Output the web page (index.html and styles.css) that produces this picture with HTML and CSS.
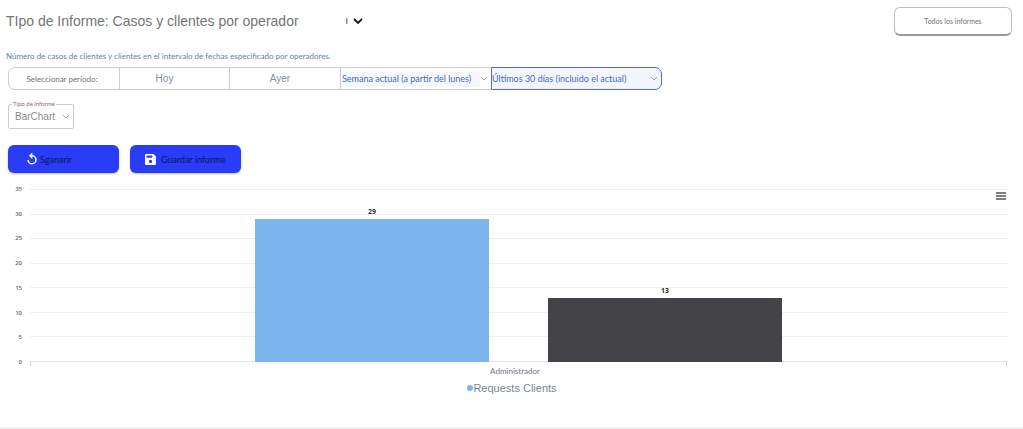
FILE: index.html
```html
<!DOCTYPE html>
<html lang="es">
<head>
<meta charset="utf-8">
<title>Informe de casos</title>
<link rel="stylesheet" href="styles.css">
</head>
<body>
<main class="page">
  <header class="header">
    <h1 class="title">TIpo de Informe: Casos y cllentes por operador</h1>
    <button class="switcher" type="button" aria-label="Cambiar informe"><span>I</span>
      <svg width="10" height="6" viewBox="0 0 10 6"><path d="M1 1l4 4 4-4" fill="none" stroke="#111" stroke-width="1.8"/></svg>
    </button>
    <button class="all-reports compact" type="button">Todos los informes</button>
  </header>
  <p class="description compact">Número de casos de clientes y clientes en el intervalo de fechas especificado por operadores.</p>

  <div class="periods">
    <span class="cell label compact">Seleccionar período:</span>
    <button class="cell today" type="button">Hoy</button>
    <button class="cell yesterday" type="button">Ayer</button>
    <div class="cell dropdown week">
      <select class="compact" aria-label="Semana"><option>Semana actual (a partir del lunes)</option></select>
      <svg class="chevron" width="8" height="5" viewBox="0 0 8 5"><path d="M1 1l3 3 3-3"/></svg>
    </div>
    <div class="cell dropdown days">
      <select class="compact" aria-label="Días"><option>Últimos 30 días (incluido el actual)</option></select>
      <svg class="chevron" width="8" height="5" viewBox="0 0 8 5"><path d="M1 1l3 3 3-3"/></svg>
    </div>
  </div>

  <div class="type-field">
    <label class="type-label compact" for="type">Tipo de informe</label>
    <select id="type"><option>BarChart</option></select>
    <svg class="chevron" width="8" height="5" viewBox="0 0 8 5"><path d="M1 1l3 3 3-3"/></svg>
  </div>

  <div class="actions">
    <button class="action generate compact" type="button">
      <svg width="12" height="14" viewBox="0 0 12 14"><path d="M2 8a4 4 0 1 0 4-4.2H4" fill="none" stroke="#fff" stroke-width="1.5"/><path d="M6.300 .6v6.400L2.900 3.800z" fill="#fff"/></svg>
      Sganarir
    </button>
    <button class="action save compact" type="button">
      <svg width="11" height="11" viewBox="0 0 11 11"><path fill="#fff" fill-rule="evenodd" d="M1.300 0H8.500L11 2.500V9.700Q11 11 9.700 11H1.300Q0 11 0 9.700V1.300Q0 0 1.300 0zM1.500 1.500v2.200h5.800V1.500zM5.500 5.700a1.700 1.700 0 1 0 .01 0z"/></svg>
      Guardar informe
    </button>
  </div>

  <section class="chart" aria-label="Casos y clientes">
    <div class="y-axis"><span>35</span><span>30</span><span>25</span><span>20</span><span>15</span><span>10</span><span>5</span><span>0</span></div>
    <div class="plot">
      <div class="gridlines"><i></i><i></i><i></i><i></i><i></i><i></i><i></i><i class="base"></i></div>
      <div class="bars">
        <div class="column"><span class="value">29</span><div class="bar requests" style="height:82.86%"></div></div>
        <div class="column"><span class="value">13</span><div class="bar clients" style="height:37.14%"></div></div>
      </div>
      <button class="menu" type="button" aria-label="Menú del gráfico"><svg width="10" height="8" viewBox="0 0 10 8"><path d="M0 1h10M0 4h10M0 7h10" stroke="#555" stroke-width="1.600"/></svg></button>
    </div>
    <div class="x-axis compact">Administrador</div>
    <div class="legend"><span class="dot"></span>Requests Clients</div>
  </section>
  <footer class="footer"></footer>
</main>
</body>
</html>
```
FILE: styles.css
```css
* { box-sizing: border-box; }
body { margin: 0; background: #fff; font-family: "Liberation Sans", Arial, sans-serif; color: #777; }
button, select { font-family: inherit; margin: 0; padding: 0; border: 0; background: transparent; color: inherit; appearance: none; }
.page { display: flex; flex-direction: column; min-height: 100vh; }
.compact { font-family: Lato, "Liberation Sans", sans-serif; }

.header { display: flex; align-items: center; height: 42px; padding: 0 11px 0 6px; }
.title { margin: 0; font-size: 14px; line-height: 20px; font-weight: 400; color: #757575; }
.switcher { display: flex; align-items: center; gap: 5px; margin-left: 47px; font-size: 9px; color: #1c3f6e; }
.all-reports { width: 118px; height: 29px; margin-left: auto; border: 1px solid #bdbdbd; border-bottom: 2px solid #999; border-radius: 6px; font-size: 7px; color: #776f75; }

.description { margin: 8px 6px 5px; font-size: 8px; line-height: 12px; color: #5f80b0; }

.periods { display: flex; height: 23px; margin-left: 8px; }
.cell { display: flex; align-items: center; justify-content: center; border: 1px solid #ccc; border-left-width: 0; }
.label { width: 112px; border-left-width: 1px; border-radius: 7px 0 0 7px; font-size: 8px; color: #776f70; padding-right: 4px; }
.today { width: 110px; padding-right: 20px; font-size: 10px; color: #8390a8; }
.yesterday { width: 111px; padding-right: 10px; font-size: 10px; color: #8390a8; }
.dropdown { justify-content: flex-start; }
.dropdown select { flex: 1; min-width: 0; height: 16px; font-size: 9px; color: #4169cf; }
.week { width: 150px; padding: 0 3px 0 1px; border-right-width: 0; }
.week select { background: #f6f8ff; }
.days { width: 171px; padding-right: 3px; border: 1px solid #5366ed; border-radius: 0 7px 7px 0; background: #f4f6ff; }
.chevron { flex: none; fill: none; stroke: #aaa; stroke-width: 1; }

.type-field { position: relative; display: flex; align-items: center; width: 66px; height: 25px; margin: 14px 0 0 8px; padding: 0 3px 0 6px; border: 1px solid #ccc; border-radius: 2px; }
.type-label { position: absolute; top: -6px; left: 3px; padding: 0 1px; font-size: 6px; line-height: 10px; white-space: nowrap; background: #fff; color: #876d7a; }
.type-field select { flex: 1; min-width: 0; font-size: 10px; color: #8b8b8b; }

.actions { display: flex; gap: 11px; margin: 16px 0 0 8px; }
.action { display: flex; align-items: center; width: 111px; height: 28px; border-radius: 6px; background: #283cfa; box-shadow: 0 1px 2px #bbb; font-size: 9px; color: #101850; white-space: nowrap; }
.generate { gap: 2px; padding-left: 18px; }
.save { gap: 5px; padding-left: 15px; }

.chart { display: grid; grid-template-columns: 22px 1fr; column-gap: 8px; margin: 12px 16px 0 0; }
.y-axis { display: flex; flex-direction: column; justify-content: space-between; height: 181px; margin-bottom: -4px; text-align: right; font-family: "Open Sans", sans-serif; font-size: 6px; line-height: 8px; font-weight: 600; color: #666; }
.plot { display: grid; height: 173px; margin-top: 4px; }
.gridlines, .bars, .menu { grid-area: 1 / 1; }
.gridlines { display: flex; flex-direction: column; justify-content: space-between; }
.gridlines i { height: 1px; background: #f0f0f0; }
.gridlines .base { background: #dfe3ef; }
.bars { display: flex; gap: 11%; padding: 0 23%; height: 173px; }
.column { flex: 1; display: flex; flex-direction: column; justify-content: flex-end; align-items: center; }
.value { font-family: "Open Sans", sans-serif; font-size: 7px; line-height: 8px; font-weight: 700; color: #333; margin-bottom: 3px; }
.bar { width: 100%; flex: none; }
.requests { background: #7cb5ec; }
.clients { background: #434348; }
.menu { display: flex; justify-self: end; align-self: start; padding: 3px 1px; }
.x-axis { grid-column: 2; height: 18px; padding: 4px 7px 0 0; border: solid transparent; border-width: 0 1px; border-image: linear-gradient(#ccd6eb 5px, transparent 5px) 1; font-size: 8px; line-height: 10px; text-align: center; color: #756f86; }
.legend { grid-column: 2; display: flex; align-items: center; justify-content: center; padding-right: 13px; font-size: 11px; line-height: 16px; color: #788594; }
.dot { width: 6px; height: 6px; border-radius: 50%; background: #7cb5ec; }
.footer { height: 2px; margin-top: auto; background: #f0f1f5; }
```
